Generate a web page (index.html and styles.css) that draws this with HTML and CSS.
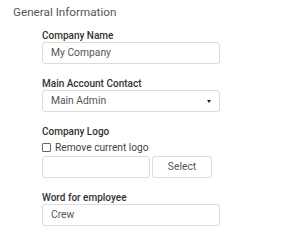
FILE: index.html
```html
<!DOCTYPE html>
<html>
<head>
<meta charset="utf-8">
<link rel="stylesheet" href="styles.css">
</head>
<body>
<div class="page">
  <div class="title">General Information</div>
  <div class="form">
    <div class="group">
      <label class="label">Company Name</label>
      <div class="input">My Company</div>
    </div>
    <div class="group">
      <label class="label">Main Account Contact</label>
      <div class="input select"><span>Main Admin</span><span class="caret"></span></div>
    </div>
    <div class="group">
      <label class="label">Company Logo</label>
      <div class="check-row"><span class="checkbox"></span><span>Remove current logo</span></div>
      <div class="file-row">
        <div class="input file"></div>
        <div class="btn">Select</div>
      </div>
    </div>
    <div class="group">
      <label class="label">Word for employee</label>
      <div class="input">Crew</div>
    </div>
  </div>
</div>
</body>
</html>
```
FILE: styles.css
```css
html, body {
  margin: 0;
  padding: 0;
  background: #fff;
}
body {
  font-family: Roboto, "Liberation Sans", sans-serif;
  color: #555;
}
.page {
  padding-top: 4px;
}
.title {
  padding-left: 13px;
  font-size: 11.7px;
  line-height: 16px;
  color: #555;
  margin-bottom: 9px;
}
.form {
  padding-left: 42px;
  width: 178px;
}
.group {
  margin-bottom: 13px;
}
.label {
  display: block;
  font-size: 10px;
  line-height: 13px;
  font-weight: 500;
  color: #333;
}
.input {
  box-sizing: border-box;
  height: 22px;
  border: 1px solid #dcdcdc;
  border-radius: 3px;
  padding: 0 8px;
  font-size: 10.3px;
  line-height: 20px;
  color: #555;
}
.select {
  display: flex;
  justify-content: space-between;
  align-items: center;
  padding-right: 8px;
}
.caret {
  width: 0;
  height: 0;
  border-left: 2.5px solid transparent;
  border-right: 2.5px solid transparent;
  border-top: 3.5px solid #222;
}
.check-row {
  display: flex;
  align-items: center;
  gap: 4px;
  height: 18px;
  font-size: 10.2px;
  color: #444;
}
.checkbox {
  box-sizing: border-box;
  width: 9px;
  height: 9px;
  border: 1px solid #666;
  border-radius: 1px;
}
.file-row {
  display: flex;
  gap: 2px;
}
.file {
  width: 108px;
}
.btn {
  box-sizing: border-box;
  width: 60px;
  height: 22px;
  border: 1px solid #dcdcdc;
  border-radius: 3px;
  font-size: 10.3px;
  line-height: 20px;
  text-align: center;
  color: #555;
}
```
